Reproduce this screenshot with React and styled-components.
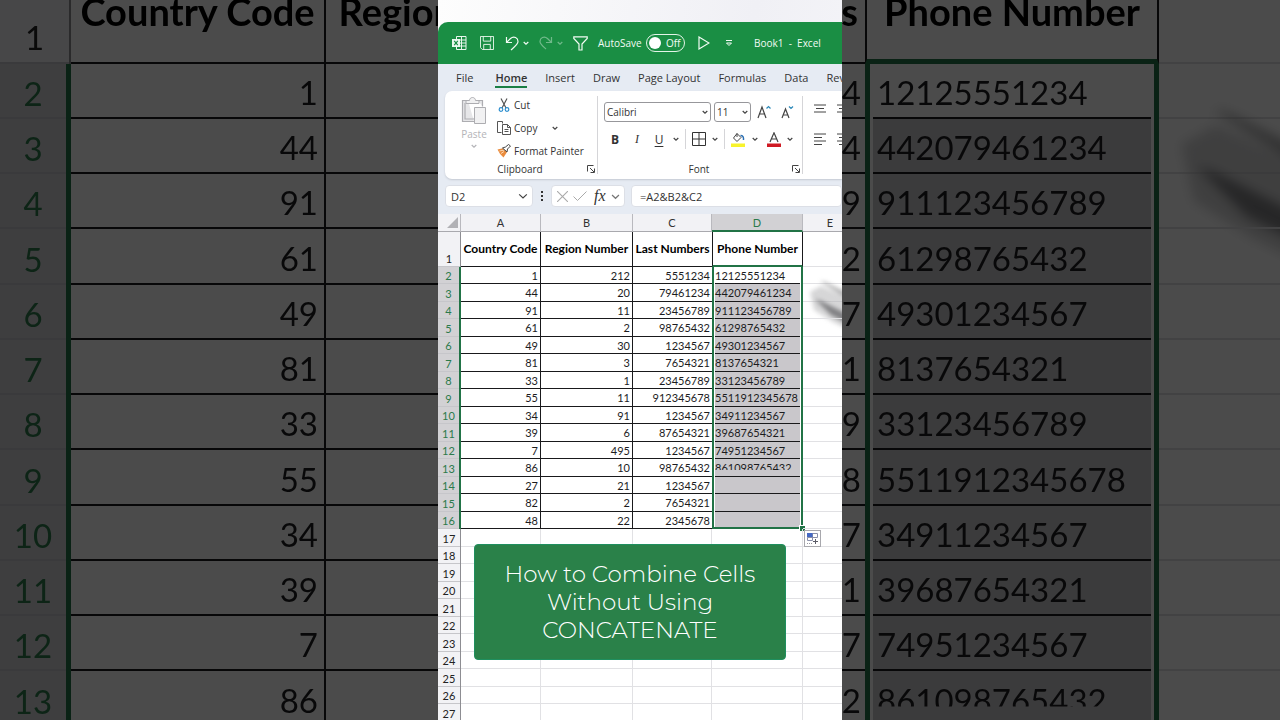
import styled, { createGlobalStyle, css, ThemeProvider } from "styled-components";

const GlobalStyle = createGlobalStyle`
  * {
    box-sizing: border-box;
  }

  body {
    margin: 0;
    background: #000;
    font-family: "Open Sans", "Noto Sans", sans-serif;
    font-size: 10px;
    color: #333;
  }

  button, input, select {
    font: inherit;
    color: inherit;
    margin: 0;
    padding: 0;
    border: 0;
    background: none;
  }

  svg {
    display: block;
    flex: none;
  }
`;

/* ---------- data ---------- */

const rows = [
  ["1", "212", "5551234", "12125551234"],
  ["44", "20", "79461234", "442079461234"],
  ["91", "11", "23456789", "911123456789"],
  ["61", "2", "98765432", "61298765432"],
  ["49", "30", "1234567", "49301234567"],
  ["81", "3", "7654321", "8137654321"],
  ["33", "1", "23456789", "33123456789"],
  ["55", "11", "912345678", "5511912345678"],
  ["34", "91", "1234567", "34911234567"],
  ["39", "6", "87654321", "39687654321"],
  ["7", "495", "1234567", "74951234567"],
  ["86", "10", "98765432", "861098765432"],
  ["27", "21", "1234567", ""],
  ["82", "2", "7654321", ""],
  ["48", "22", "2345678", ""],
];

const emptyRows = [17, 18, 19, 20, 21, 22, 23, 24, 25, 26, 27];
const titles = ["Country Code", "Region Number", "Last Numbers", "Phone Number"];
const FILLING_ROW = 13;

const small = {
  cols: [23, 80, 92, 79, 91, 55],
  font: 11,
  titleFont: 12,
  letterRow: 18,
  titleRow: 35,
  rowA: 17,
  rowB: 18,
  cycle: "2n",
  line: 1,
  frame: 2,
  gap: 1,
  pad: 2,
  padTop: 0,
  lowPad: 2,
  textPad: 0,
  clip: 3,
  smudge: 40,
  haze: 2,
};

const large = {
  cols: [71, 255, 291, 248, 294, 180],
  font: 33,
  titleFont: 38,
  letterRow: 57,
  titleRow: 109,
  rowA: 55,
  rowB: 56,
  cycle: "4n",
  line: 2,
  frame: 5,
  gap: 3,
  pad: 6,
  padTop: 4,
  lowPad: 8,
  textPad: 4,
  clip: 10,
  smudge: 126,
  haze: 6,
};

/* ---------- sheet ---------- */

const Table = styled.table`
  width: ${({ theme }) => theme.cols.reduce((a, b) => a + b, 0)}px;
  table-layout: fixed;
  border-collapse: separate;
  border-spacing: 0;
  background: #fff;
  color: #1c1c1e;
  font-family: Lato, Carlito, sans-serif;
  font-size: ${({ theme }) => theme.font}px;
  line-height: 1;

  th,
  td {
    padding: ${({ theme }) => theme.padTop}px 0 0;
  }
`;

const LetterRow = styled.tr`
  height: ${({ theme }) => theme.letterRow}px;
`;

const TitleRow = styled.tr`
  height: ${({ theme }) => theme.titleRow}px;
`;

const Row = styled.tr`
  height: ${({ theme }) => theme.rowA}px;

  &:nth-child(${({ theme }) => theme.cycle}) {
    height: ${({ theme }) => theme.rowB}px;
  }
`;

const Letter = styled.th`
  font-weight: 400;
  background: ${({ $on }) => ($on ? "#d2d1d4" : "#f2f2f5")};
  color: ${({ $on }) => ($on ? "#2b7a4b" : "#333")};
  border-right: ${({ theme }) => theme.line}px solid #b9b9be;
  border-bottom: ${({ theme, $on }) =>
    $on ? `${theme.frame}px solid #217346` : `${theme.line}px solid #a9a9ae`};
`;

const Corner = styled(Letter)`
  svg {
    width: 50%;
    margin: 0 10% 0 auto;
  }
`;

const RowNumber = styled.th`
  font-weight: 400;
  vertical-align: ${({ $low }) => ($low ? "bottom" : "middle")};
  background: ${({ $on }) => ($on ? "#d2d1d4" : "#f2f2f5")};
  color: ${({ $on }) => ($on ? "#2b7a4b" : "#222")};
  box-shadow: inset 0 -${({ theme }) => theme.line}px #c6c6ca;
  border-right: ${({ theme, $on }) =>
    $on ? `${theme.frame}px solid #217346` : `${theme.line}px solid #8d8d92`};

  && {
    padding-bottom: ${({ theme, $low }) => ($low ? theme.lowPad + theme.line : 0)}px;
  }
`;

const boxed = css`
  border-right: ${({ theme }) => theme.line}px solid #19191b;
  border-bottom: ${({ theme }) => theme.line}px solid #19191b;
`;

const TitleCell = styled.th`
  ${boxed}
  font-size: ${({ theme }) => theme.titleFont}px;
  font-weight: 700;
  color: #000;
  text-align: center;
  white-space: nowrap;

  &:nth-child(4) {
    border-right: 0;
  }

  &&:nth-child(5) {
    padding-top: ${({ theme }) => theme.padTop + theme.frame - theme.line}px;
    border-left: ${({ theme }) => theme.line}px solid #19191b;
    border-bottom: ${({ theme }) => theme.frame}px solid #217346;
  }
`;

const NumberCell = styled.td`
  ${boxed}
  text-align: right;

  && {
    padding-right: ${({ theme }) => theme.pad}px;
  }

  &&:nth-child(4) {
    border-right: 0;
    padding-right: ${({ theme }) => theme.line * 2}px;
  }
`;

const PickedCell = styled.td`
  position: relative;
  height: inherit;
  border: 0 solid #217346;
  border-left-width: ${({ theme }) => theme.frame}px;
  border-right-width: ${({ theme }) => theme.frame}px;
  border-bottom-width: ${({ theme, $last }) => ($last ? theme.frame : 0)}px;

  && {
    padding: 0 ${({ theme }) => theme.gap}px;
  }
`;

const PickedFill = styled.div`
  display: flex;
  align-items: center;
  height: 100%;
  padding: ${({ theme }) => `${theme.padTop}px 0 0 ${theme.textPad}px`};
  background: ${({ $first }) => ($first ? "#fff" : "#c9c7cb")};
  border-bottom: ${({ theme, $last }) => ($last ? 0 : theme.line)}px solid #19191b;

  span {
    clip-path: ${({ theme, $cut }) => ($cut ? `inset(0 0 ${theme.clip}px 0)` : "none")};
  }
`;

const FillHandle = styled.i`
  position: absolute;
  right: -4px;
  bottom: -4px;
  width: 6px;
  height: 6px;
  background: #217346;
  border: 1px solid #fff;
  border-width: 1px 0 0 1px;
`;

const EmptyCell = styled.td`
  position: relative;
  border-right: ${({ theme }) => theme.line}px solid #e1e1e4;
  border-bottom: ${({ theme }) => theme.line}px solid #e1e1e4;
`;

const Smudge = styled.svg`
  position: absolute;
  top: 0;
  left: 0;
  width: ${({ theme }) => theme.smudge}px;
  overflow: visible;
  filter: blur(${({ theme }) => theme.haze}px);
`;

const FillOptions = styled.button`
  position: absolute;
  top: 1px;
  left: 1px;
  z-index: 1;
  width: 17px;
  height: 17px;
  display: grid;
  place-items: center;
  background: #fff;
  border: 1px solid #a8a8ad;
`;

function Trail() {
  return (
    <Smudge viewBox="0 0 40 50" aria-hidden="true">
      <path d="M7 8L18 2L50 16V48L30 38L11 26Z" fill="#b4b4b6" opacity="0.55" />
      <path d="M17-3L22-2L50 12V18Z" fill="#6a6a6d" opacity="0.6" />
      <path d="M12 15L18 17L50 33V42L28 31Z" fill="#4a4a4d" opacity="0.6" />
    </Smudge>
  );
}

function Sheet({ options }) {
  const theme = options ? small : large;

  return (
    <ThemeProvider theme={theme}>
      <Table>
        <colgroup>
          {theme.cols.map((width, i) => (
            <col key={i} width={width} />
          ))}
        </colgroup>
        <thead>
          <LetterRow>
            <Corner>
              <svg viewBox="0 0 10 10">
                <path d="M10 0V10H0Z" fill="#b1b1b5" />
              </svg>
            </Corner>
            {["A", "B", "C", "D", "E"].map((letter) => (
              <Letter key={letter} $on={letter === "D"}>
                {letter}
              </Letter>
            ))}
          </LetterRow>
          <TitleRow>
            <RowNumber $low>1</RowNumber>
            {titles.map((title) => (
              <TitleCell key={title}>{title}</TitleCell>
            ))}
            <EmptyCell />
          </TitleRow>
        </thead>
        <tbody>
          {rows.map(([country, region, last, phone], i) => {
            const isLast = i === rows.length - 1;
            return (
              <Row key={i}>
                <RowNumber $on>{i + 2}</RowNumber>
                <NumberCell>{country}</NumberCell>
                <NumberCell>{region}</NumberCell>
                <NumberCell>{last}</NumberCell>
                <PickedCell $last={isLast}>
                  <PickedFill $first={i === 0} $last={isLast} $cut={i + 2 === FILLING_ROW}>
                    <span>{phone}</span>
                  </PickedFill>
                  {isLast && <FillHandle />}
                </PickedCell>
                <EmptyCell>{i === 1 && <Trail />}</EmptyCell>
              </Row>
            );
          })}
          {emptyRows.map((n) => (
            <Row key={n}>
              <RowNumber>{n}</RowNumber>
              <EmptyCell />
              <EmptyCell />
              <EmptyCell />
              <EmptyCell />
              <EmptyCell>
                {options && n === 17 && (
                  <FillOptions aria-label="Auto fill options">
                    <svg width="13" height="13" viewBox="0 0 13 13" fill="none">
                      <path d="M1.5 1.5h10v4h-10zM6.5 1.5v4M1.5 5.5v3h5v-3" stroke="#8a8fa8" />
                      <path d="M1 1h5.500v4H1z" fill="#4468c4" />
                      <path d="M1 11.500h5" stroke="#9a9aa0" strokeDasharray="1 1" />
                      <path d="M9.500 7v5M7 9.500h5" stroke="#5b5b66" />
                    </svg>
                  </FillOptions>
                )}
              </EmptyCell>
            </Row>
          ))}
        </tbody>
      </Table>
    </ThemeProvider>
  );
}

/* ---------- page ---------- */

const Page = styled.main`
  position: relative;
  display: flex;
  justify-content: center;
  height: 100vh;
  overflow: hidden;
`;

const Backdrop = styled.div`
  position: absolute;
  inset: -102px 0 0;
  background: #fff;
  filter: brightness(0.295);
`;

const Clip = styled.section`
  position: relative;
  width: min(100%, 404px);
  height: 100%;
  overflow: hidden;
  background: linear-gradient(100deg, #fdfdfd, #f0f0f5 60%, #f7f7fa);
  padding-top: 22px;
`;

const Window = styled.div`
  background: #e6ebf3;
  border-radius: 10px 0 0 0;
  overflow: hidden;
`;

const TitleBar = styled.header`
  display: grid;
  grid-template-columns: 28px 25px 34px 34px 25px 48px 52px 27px 29px auto;
  align-items: center;
  height: 42px;
  padding-left: 14px;
  background: #1a8e44;
  color: #f2fbf4;
  white-space: nowrap;
`;

const BarButton = styled.button`
  display: flex;
  align-items: center;
  gap: 4px;
  opacity: ${({ disabled }) => (disabled ? 0.4 : 1)};
`;

const Switch = styled.span`
  display: flex;
  align-items: center;
  gap: 5px;
  width: 39px;
  height: 18px;
  padding-left: 2px;
  border: 1px solid #e3f4e8;
  border-radius: 9px;

  input {
    appearance: none;
    width: 12px;
    height: 12px;
    border-radius: 50%;
    background: #fff;
  }
`;

const Tabs = styled.nav`
  display: flex;
  gap: 18px;
  height: 27px;
  padding-left: 18px;
  font-size: 11px;
  line-height: 15px;
  white-space: nowrap;
`;

const Tab = styled.button`
  flex: none;
  align-self: flex-start;
  margin-top: 6px;
  padding-bottom: 1px;
  border-bottom: 2px solid ${({ $active }) => ($active ? "#1a7f45" : "transparent")};
  font-weight: ${({ $active }) => ($active ? 600 : 400)};

  &:first-child {
    margin-right: 4px;
  }
`;

const Ribbon = styled.div`
  display: flex;
  height: 88px;
  margin-left: 7px;
  background: #fff;
  border-radius: 7px 0 0 7px;
  box-shadow: 0 1px 2px #c4c9d2;
`;

const Group = styled.div`
  flex: none;
  display: flex;
  flex-direction: column;
  justify-content: space-between;
  width: ${({ $width }) => $width}px;
  padding: 6px 0 3px;
`;

const Divider = styled.i`
  flex: none;
  width: 1px;
  height: ${({ $height }) => $height}px;
  background: #d5d5d8;
  align-self: center;
`;

const GroupLabel = styled.footer`
  display: grid;
  grid-template-columns: 1fr auto 1fr;
  align-items: center;
  line-height: 14px;
  padding-right: 2px;

  button {
    grid-column: 3;
    justify-self: end;
  }

  span {
    grid-column: 2;
  }
`;

const ClipboardTools = styled.div`
  display: grid;
  grid-template-columns: 34px 1fr;
  column-gap: 5px;
  padding-left: 12px;
`;

const PasteButton = styled.button`
  display: flex;
  flex-direction: column;
  align-items: center;
  gap: 2px;
  color: #b4b4b8;
  line-height: 14px;
`;

const ToolList = styled.div`
  display: flex;
  flex-direction: column;
  gap: 7px;
  padding-left: 1px;
`;

const Tool = styled.button`
  display: flex;
  align-items: center;
  gap: 3px;
  height: 16px;
  white-space: nowrap;
`;

const CopyCaret = styled.span`
  padding-left: 12px;
`;

const FontTools = styled.div`
  display: flex;
  flex-direction: column;
  gap: 7px;
  padding: 5px 0 0 6px;
`;

const ToolRow = styled.div`
  display: flex;
  align-items: center;
  height: 20px;
  gap: ${({ $gap }) => $gap}px;
`;

const SizeButtons = styled.div`
  display: flex;
  gap: 8px;
  padding-left: 3px;
`;

const LetterButtons = styled.div`
  display: flex;
  gap: 10px;
  padding: 0 2px 0 5px;
`;

const ColorButtons = styled.div`
  display: flex;
  align-items: center;
  gap: 6px;

  button:nth-of-type(2) {
    padding-left: 3px;
  }
`;

const Field = styled.span`
  display: flex;
  align-items: center;
  width: ${({ $width }) => $width}px;
  height: 20px;
  padding: 0 2px;
  border: 1px solid #97979b;
  border-radius: 3px;

  select {
    appearance: none;
    flex: 1;
    min-width: 0;
  }
`;

const Glyph = styled.button`
  width: 12px;
  font-size: 12px;
  font-weight: ${({ $bold }) => ($bold ? 700 : 400)};
  font-style: ${({ $italic }) => ($italic ? "italic" : "normal")};
  font-family: ${({ $italic }) => ($italic ? '"Liberation Serif", serif' : "inherit")};
  text-decoration: ${({ $underline }) => ($underline ? "underline" : "none")};
  text-underline-offset: 2px;
`;

const Align = styled.div`
  display: flex;
  flex-direction: column;
  gap: 9px;
  padding: 9px 0 0 11px;
`;

const FormulaBar = styled.div`
  display: flex;
  align-items: center;
  gap: 6px;
  padding: 6px 0 7px 7px;
  font-size: 11px;
`;

const Box = styled.div`
  flex: ${({ $width }) => ($width ? "none" : 1)};
  display: flex;
  align-items: center;
  gap: 5px;
  width: ${({ $width }) => ($width ? `${$width}px` : "auto")};
  height: 22px;
  padding: 0 4px 0 ${({ $width }) => ($width ? 5 : 8)}px;
  background: #fff;
  border: 1px solid #dcdfe6;
  border-radius: 4px;

  input {
    flex: 1;
    min-width: 0;
  }
`;

const FxLabel = styled.i`
  margin-left: 2px;
  font: italic 16px "Liberation Serif", serif;
`;

const Banner = styled.h1`
  position: absolute;
  left: 36px;
  right: 56px;
  bottom: 60px;
  z-index: 2;
  margin: 0;
  padding: 15px 0;
  background: #2a8149;
  border: 1px solid #1f8f5f;
  border-radius: 4px;
  color: #fff;
  font-family: Montserrat, "DejaVu Sans", sans-serif;
  font-size: 23px;
  font-weight: 300;
  line-height: 28px;
  text-align: center;
`;

function Caret({ size = 6, color = "#444" }) {
  return (
    <svg width={size} height={size} viewBox="0 0 6 6" fill="none">
      <path
        d="M.7 2L3 4.200L5.300 2"
        stroke={color}
        vectorEffect="non-scaling-stroke"
        strokeWidth="1.200"
      />
    </svg>
  );
}

function Launcher() {
  return (
    <button aria-label="More options">
      <svg width="8" height="8" viewBox="0 0 8 8" fill="none" stroke="#444">
        <path d="M.5 6.500V.5H6.500M3 3l4 4M7.500 3.500v4h-4" />
      </svg>
    </button>
  );
}

function Lines({ widths, label }) {
  return (
    <button aria-label={label}>
      <svg width="12" height="13" viewBox="0 0 12 13" stroke="#444">
        {widths.map((w, i) => (
          <path key={i} d={`M${w < 0 ? 2 : 0} ${i * 3.5 + 1}h${Math.abs(w)}`} />
        ))}
      </svg>
    </button>
  );
}

function QuickAccess() {
  return (
    <TitleBar>
      <svg width="15" height="14" viewBox="0 0 15 14" fill="none" stroke="#e9f7ed">
        <path d="M4.500 3V.5h9.500v13H4.500V11M9.500.5v13M8 4h6M8 7h6M8 10h6" />
        <path d="M0 3h8v8H0z" fill="#e9f7ed" stroke="none" />
        <path d="M2.200 4.800l3.600 4.400M5.800 4.800L2.200 9.200" stroke="#1a8e44" strokeWidth="1.200" />
      </svg>
      <BarButton aria-label="Save">
        <svg width="14" height="14" viewBox="0 0 15 15" fill="none" stroke="#e9f7ed">
          <path d="M.5.5h14v14H2.500l-2-2zM3.500.5v5h8v-5M4 14.500V9h7v5.500" />
        </svg>
      </BarButton>
      <BarButton aria-label="Undo">
        <svg width="14" height="15" viewBox="0 0 14 15" fill="none" stroke="#f2fbf4" strokeWidth="1.200">
          <path d="M1.500 1v5.500H7M1.500 6.500L5.500 2.500C9-.5 13 2 13 5.500C13 8 11 9.500 6 14" />
        </svg>
        <Caret color="#f2fbf4" />
      </BarButton>
      <BarButton aria-label="Redo" disabled>
        <svg width="14" height="15" viewBox="0 0 14 15" fill="none" stroke="#f2fbf4" strokeWidth="1.200">
          <path d="M12.500 1v5.500H7M12.500 6.500L8.500 2.500C5-.5 1 2 1 5.500C1 8 3 9.500 7 13" />
        </svg>
        <Caret color="#f2fbf4" />
      </BarButton>
      <BarButton aria-label="Filter">
        <svg width="15" height="15" viewBox="0 0 15 15" fill="none" stroke="#f2fbf4" strokeWidth="1.200">
          <path d="M.8.800h13.400v1.700L9 8v6H6V8L.8 2.500z" />
        </svg>
      </BarButton>
      <label htmlFor="autosave">AutoSave</label>
      <Switch>
        <input id="autosave" type="checkbox" role="switch" />
        Off
      </Switch>
      <BarButton aria-label="Run">
        <svg width="12" height="14" viewBox="0 0 12 14" fill="none" stroke="#f2fbf4" strokeWidth="1.200">
          <path d="M1 1l10 6l-10 6z" />
        </svg>
      </BarButton>
      <BarButton aria-label="Customize toolbar">
        <svg width="8" height="7" viewBox="0 0 8 7" fill="none" stroke="#f2fbf4">
          <path d="M1 .5h6M1.500 3h5L4 5.500z" />
        </svg>
      </BarButton>
      <span>Book1&nbsp; - &nbsp;Excel</span>
    </TitleBar>
  );
}

function Clipboard() {
  return (
    <Group $width={152}>
      <ClipboardTools>
        <PasteButton disabled>
          <svg width="26" height="28" viewBox="0 0 26 28" fill="none" stroke="#adadb1">
            <path
              d="M7 3.500H1.500v21H13M17 3.500h4.500v6M4 6v16h9"
              strokeWidth="1.200"
              fill="#e6e6e8"
            />
            <path d="M5 6.500V3.500h3.500C8.500-.5 14.500-.5 14.500 3.500H18v3z" fill="#f1f1f2" />
            <path d="M13.500 10.500h11v16h-11z" fill="#f1f1f2" />
          </svg>
          Paste
          <Caret color="#b4b4b8" />
        </PasteButton>
        <ToolList>
          <Tool>
            <svg width="14" height="14" viewBox="0 0 14 14" fill="none" stroke="#555" strokeWidth="1.200">
              <path d="M4 .5L9 10M10 .5L5 10" />
              <circle cx="4" cy="11.500" r="1.800" stroke="#2e8fcf" />
              <circle cx="10" cy="11.500" r="1.800" stroke="#2e8fcf" />
            </svg>
            Cut
          </Tool>
          <Tool>
            <svg width="14" height="14" viewBox="0 0 14 14" fill="none" stroke="#555">
              <path d="M4.500 11.500H.5V.5h5v2M5.500 3.500h5l3 3v7h-8zM10.500 3.500v3h3M7.500 8.500h4M7.500 10.500h4" />
            </svg>
            Copy
            <CopyCaret>
              <Caret />
            </CopyCaret>
          </Tool>
          <Tool>
            <svg width="14" height="14" viewBox="0 0 14 14">
              <path d="M.5 5.500L7 4l3 4l-3.500 5.500Q3 11 .5 5.500z" fill="#ea8b3c" />
              <path d="M2.500 7l5-1M4 9.500l3-2" stroke="#fbd9b4" />
              <path d="M5.500 4L8.500 3L11.500.5L13.500 2L10.500 5L10 8z" fill="#fff" stroke="#444" />
            </svg>
            Format Painter
          </Tool>
        </ToolList>
      </ClipboardTools>
      <GroupLabel>
        <span>Clipboard</span>
        <Launcher />
      </GroupLabel>
    </Group>
  );
}

function FontGroup() {
  return (
    <Group $width={204}>
      <FontTools>
        <ToolRow $gap={3}>
          <Field $width={107}>
            <select aria-label="Font">
              <option>Calibri</option>
            </select>
            <Caret />
          </Field>
          <Field $width={37}>
            <select aria-label="Font size">
              <option>11</option>
            </select>
            <Caret />
          </Field>
          <SizeButtons>
            <button aria-label="Increase font size">
              <svg width="16" height="14" viewBox="0 0 16 14" fill="none" stroke="#444" strokeWidth="1.200">
                <path d="M1 13L5 2L9 13M2.500 9h5" />
                <path d="M9.500 3.500l2-2l2 2" stroke="#2b88b8" />
              </svg>
            </button>
            <button aria-label="Decrease font size">
              <svg width="14" height="14" viewBox="0 0 14 14" fill="none" stroke="#444" strokeWidth="1.200">
                <path d="M1 13L4.500 4L8 13M2.200 10h4.600" />
                <path d="M8 1.500l2 2l2-2" stroke="#2b88b8" />
              </svg>
            </button>
          </SizeButtons>
        </ToolRow>
        <ToolRow $gap={6}>
          <LetterButtons>
            <Glyph $bold>B</Glyph>
            <Glyph $italic>I</Glyph>
            <Glyph $underline>U</Glyph>
          </LetterButtons>
          <Caret />
          <Divider $height={20} />
          <button aria-label="Borders">
            <svg width="14" height="14" viewBox="0 0 14 14" fill="none" stroke="#333">
              <path d="M.5.5h13v13H.5zM7 .5v13M.5 7h13" />
            </svg>
          </button>
          <Caret />
          <Divider $height={20} />
          <ColorButtons>
            <button aria-label="Fill color">
              <svg width="15" height="15" viewBox="0 0 15 15" fill="none">
                <path d="M6 1.500L2.500 6L6 9.500L10 5.500zM6 1.500V5" stroke="#444" />
                <path d="M9.500 3.500Q13 3.500 12.500 8" stroke="#2a6fb3" strokeWidth="1.500" />
                <path d="M0 11.500h14v3.500H0z" fill="#f8f32b" />
              </svg>
            </button>
            <Caret />
            <button aria-label="Font color">
              <svg width="14" height="15" viewBox="0 0 14 15" fill="none">
                <path d="M3 10L7 .8L11 10M4.500 7h5" stroke="#444" strokeWidth="1.200" />
                <path d="M0 11.500h14v3.500H0z" fill="#cf1a23" />
              </svg>
            </button>
            <Caret />
          </ColorButtons>
        </ToolRow>
      </FontTools>
      <GroupLabel>
        <span>Font</span>
        <Launcher />
      </GroupLabel>
    </Group>
  );
}

const tabs = ["File", "Home", "Insert", "Draw", "Page Layout", "Formulas", "Data", "Review"];

function App() {
  return (
    <Page>
      <GlobalStyle />
      <Backdrop aria-hidden="true">
        <Sheet />
      </Backdrop>
      <Clip>
        <Window>
          <QuickAccess />
          <Tabs>
            {tabs.map((tab) => (
              <Tab key={tab} $active={tab === "Home"}>
                {tab}
              </Tab>
            ))}
          </Tabs>
          <Ribbon>
            <Clipboard />
            <Divider $height={78} />
            <FontGroup />
            <Divider $height={78} />
            <Align>
              <ToolRow $gap={11}>
                <Lines label="Top align" widths={[12, -8, 12]} />
                <Lines label="Middle align" widths={[12, -8, 12]} />
              </ToolRow>
              <ToolRow $gap={11}>
                <Lines label="Align left" widths={[12, 8, 12, 8]} />
                <Lines label="Center" widths={[12, -8, 12, -8]} />
              </ToolRow>
            </Align>
          </Ribbon>
          <FormulaBar>
            <Box $width={88}>
              <input aria-label="Name box" defaultValue="D2" />
              <Caret size={10} />
            </Box>
            <svg width="6" height="12" viewBox="0 0 6 12" fill="#333">
              <path d="M2 1h2v2H2zM2 5h2v2H2zM2 9h2v2H2z" />
            </svg>
            <Box $width={74}>
              <svg width="11" height="11" viewBox="0 0 10 10" stroke="#aaa">
                <path d="M0 0l10 10M10 0L0 10" />
              </svg>
              <svg width="14" height="10" viewBox="0 0 14 10" fill="none" stroke="#aaa">
                <path d="M.5 5.500L4.500 9.500L13.500.5" />
              </svg>
              <FxLabel>fx</FxLabel>
              <Caret size={9} color="#777" />
            </Box>
            <Box>
              <input aria-label="Formula" defaultValue="=A2&B2&C2" />
            </Box>
          </FormulaBar>
          <Sheet options />
        </Window>
        <Banner>
          How to Combine Cells
          <br />
          Without Using
          <br />
          CONCATENATE
        </Banner>
      </Clip>
    </Page>
  );
}

export default App;
